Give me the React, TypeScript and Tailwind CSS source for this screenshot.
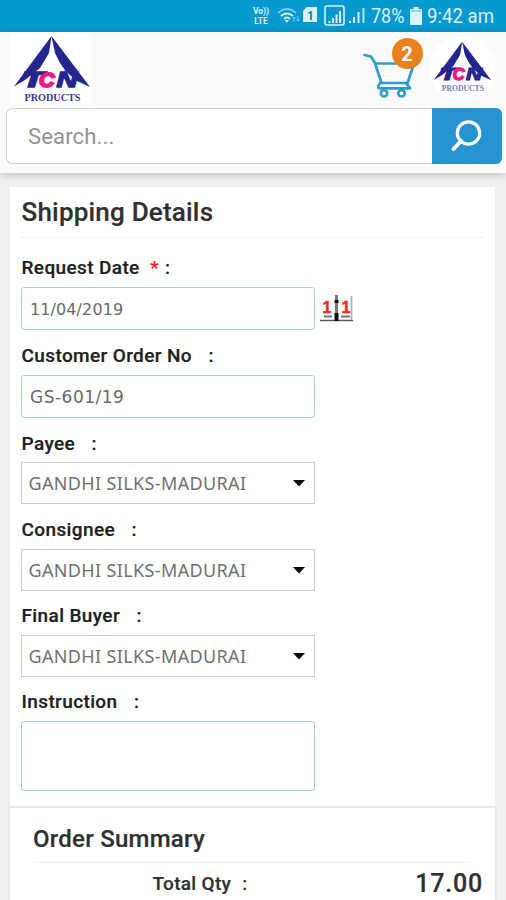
import React from "react";

function Logo({ small = false }: { small?: boolean }) {
  return (
    <svg viewBox="0 0 78 70" className="block h-full w-full" role="img" aria-label="TCN Products">
      <path d="M38.5 1 L1 51.5 L12 45 L27 33 L36 18 Z" fill="#24258f" />
      <path d="M38.5 1 L77 52 L64 46 L50 34 L42 18 Z" fill="#24258f" />
      <path d="M38.7 7 L35.5 22 L26 35 H52 L42.5 22 Z" fill="#fff" />
      <text x="9" y="52" fontSize="22.5" textLength="22" lengthAdjust="spacingAndGlyphs" fill="#24258f" stroke="#24258f" strokeWidth="1.6" className="font-['Liberation_Sans'] font-bold italic">T</text>
      <text x="26" y="51.5" fontSize="21" textLength="15.5" lengthAdjust="spacingAndGlyphs" fill="#f21885" stroke="#f21885" strokeWidth="2" className="font-['Liberation_Sans'] font-bold italic">C</text>
      <text x="43.5" y="51.5" fontSize="21.5" textLength="21" lengthAdjust="spacingAndGlyphs" fill="#24258f" stroke="#24258f" strokeWidth="1.4" className="font-['Liberation_Sans'] font-bold italic">N</text>
      <text x="11.5" y="65.5" fontSize="9.5" textLength="56" lengthAdjust="spacingAndGlyphs" fill={small ? "#7a7ab0" : "#37378f"} className="font-['Liberation_Serif'] font-bold">PRODUCTS</text>
    </svg>
  );
}

function StatusBar() {
  return (
    <div className="flex h-8 items-center bg-[#0699cf] pl-[252px] text-[#d8f2fb]">
      <div className="w-[18px] text-center text-[8.5px] leading-[10px] font-bold">
        <div className="whitespace-nowrap">Vo))</div>
        <div>LTE</div>
      </div>
      <svg width="104" height="24" viewBox="0 0 104 24" className="ml-1 shrink-0" fill="none" stroke="currentColor">
        <path d="M4 9 Q13 1 22 9" strokeWidth="1.5" opacity=".7" />
        <path d="M7 12 Q13 7 19 12 M10 15 Q13 12 16 15" strokeWidth="2" />
        <path d="M11 16 H15 L13 19 Z" fill="currentColor" stroke="none" />
        <path d="M20 13 V18 M24 12 V17 M18.5 14.5 L20 13 L21.5 14.5 M22.5 15.5 L24 17 L25.5 15.5" strokeWidth="1" opacity=".6" />
        <path d="M33 3 H43 V18 H29 V7 Z" fill="currentColor" stroke="none" />
        <text x="33" y="15.5" fontSize="12" fill="#087ba5" stroke="none" className="font-['Roboto'] font-bold">1</text>
        <rect x="51" y="2" width="19" height="19" rx="2" strokeWidth="1.6" />
        <path d="M55.5 17 V19 M59 14 V19 M62.5 10.5 V19 M66 7 V19" strokeWidth="2" />
        <path d="M76 17 V19 M80 13 V19 M84.5 8 V19" strokeWidth="2" />
        <path d="M89.5 4 V19" strokeWidth="2" opacity=".8" />
      </svg>
      <span className="-ml-[7px] w-[34px] pt-px text-[19.5px] leading-8 whitespace-nowrap"><span className="inline-block origin-left scale-x-[.92]">78%</span></span>
      <svg width="12" height="20" viewBox="0 0 12 20" className="ml-[5px] shrink-0" fill="currentColor">
        <path d="M3.5 1 H8.5 V3 H11 Q12 3 12 4 V18 Q12 19 11 19 H1 Q0 19 0 18 V4 Q0 3 1 3 H3.5 Z" />
        <path d="M1 4 H11 V6 H1 Z" fill="#8fd0ea" />
      </svg>
      <span className="ml-[5px] pt-px text-[19.5px] leading-8 whitespace-nowrap"><span className="inline-block origin-left scale-x-[.955]">9:42 am</span></span>
    </div>
  );
}

function CartButton() {
  return (
    <div className="relative h-[62px] w-[62px]">
      <svg width="62" height="62" viewBox="0 0 62 62" fill="none" stroke="#2e9dcc" strokeWidth="2.7" strokeLinejoin="round" strokeLinecap="round">
        <path d="M3.5 17 L10 18.5 L14 25 L20.5 45 H46.5 L53 25.5 H14.5" />
        <path d="M19 45 Q15.5 50.3 19 50.3 H49 M45 45 L49 50" />
        <circle cx="23" cy="55.3" r="3.2" />
        <circle cx="40.5" cy="55.3" r="3.2" />
      </svg>
      <div className="absolute top-0 left-[30.5px] flex h-[31px] w-[31px] items-center justify-center rounded-full bg-[#e9811d] pt-px text-[20px] font-bold text-white">2</div>
    </div>
  );
}

function Header() {
  return (
    <header className="relative h-[141px] bg-[#fafafa] shadow-[0_2px_8px_rgba(0,0,0,0.2)]">
      <div className="flex h-[76px] items-start">
        <div className="ml-[9px] h-[73px] w-[83px] bg-white pt-[3px] pl-[4px]">
          <div className="h-[70px] w-[78px]"><Logo /></div>
        </div>
        <div className="mt-[6px] ml-[269px]"><CartButton /></div>
        <div className="mt-[5px] ml-[7px] h-[62px] w-[66px] rounded-[28px] bg-white pt-[4px] pl-[3px]">
          <div className="h-[53px] w-[59px]"><Logo small /></div>
        </div>
      </div>
      <div className="mr-[4.5px] ml-[6px] flex h-[56px]">
        <div className="flex flex-1 items-center rounded-l-[6px] border-[1.5px] border-r-0 border-[#d2d2d2] bg-white pl-[21px] text-[22px] tracking-[.16px] text-[#929292]">Search...</div>
        <button className="flex w-[70px] items-center justify-center rounded-r-[6px] bg-[#2694d1]" aria-label="Search">
          <svg width="34" height="34" viewBox="0 0 34 34" fill="none" stroke="white" strokeLinecap="round">
            <circle cx="18.5" cy="14" r="11.2" strokeWidth="3.2" />
            <path d="M11 22 L3.5 30" strokeWidth="4" />
          </svg>
        </button>
      </div>
    </header>
  );
}

function Label({ text, gap, required }: { text: string; gap: string; required?: boolean }) {
  return (
    <div className="flex h-[36px] items-center pl-[.5px] text-[19px] font-medium tracking-[.38px] whitespace-pre text-[#202020] [-webkit-text-stroke:.2px]">
      <span>{text}</span>
      {required && <span className="ml-[10.5px] text-[#f51b1b]">*</span>}
      <span className={gap}>:</span>
    </div>
  );
}

function TextField({ value, size }: { value: string; size: string }) {
  return (
    <div className={`flex h-[43px] w-[294px] items-center rounded-[3px] border-[1.5px] border-[#a0d0e4] bg-white pt-[2px] pl-[8px] font-['DejaVu_Sans',sans-serif] text-[#6a6a6a] ${size}`}>
      {value}
    </div>
  );
}

function SelectField() {
  return (
    <div className="flex h-[42px] w-[294px] items-center justify-between border-[1.5px] border-[#cdcdcd] bg-white pr-[9px] pl-[6.5px]">
      <span className="font-['Noto_Sans',sans-serif] text-[18px] tracking-[.36px] whitespace-nowrap text-[#707070]">GANDHI SILKS-MADURAI</span>
      <svg width="12" height="7" viewBox="0 0 12 7"><path d="M0 0 H12 L6 6.5 Z" fill="#080808" /></svg>
    </div>
  );
}

function CalendarIcon() {
  return (
    <svg width="34" height="28" viewBox="0 0 34 28">
      <path d="M0 25.5 H33" stroke="#5d5d5d" strokeWidth="1.5" />
      <path d="M31.5 1 V25" stroke="#b2b2b2" strokeWidth="1.7" />
      <path d="M16.5 0 V26" stroke="#777" strokeWidth="3" />
      <path d="M16.5 5 V8 M16.5 18 V26" stroke="#111" strokeWidth="4" />
      <path d="M4 21.5 H12 M21 21.5 H30" stroke="#777" strokeWidth="2" />
      <text x="2.5" y="18" fontSize="16" fill="#f12828" stroke="#f12828" strokeWidth=".5" className="font-['Liberation_Sans'] font-bold">1</text>
      <text x="21.5" y="18" fontSize="16" fill="#f12828" stroke="#f12828" strokeWidth=".5" className="font-['Liberation_Sans'] font-bold">1</text>
    </svg>
  );
}

export default function App() {
  return (
    <div className="h-[900px] w-[506px] overflow-hidden bg-[#f0f0f0] font-['Roboto',sans-serif]">
      <StatusBar />
      <Header />
      <main className="pt-[14px]">
        <section className="mr-[11px] ml-[10px] h-[619px] bg-white pr-[11px] pl-[11px]">
          <h1 className="h-[51px] border-b border-[#f0f0f0] pl-[.5px] text-[26px] leading-[50px] font-medium tracking-[.2px] text-[#303030] [-webkit-text-stroke:.2px]">Shipping Details</h1>
          <div className="pt-[12px]">
            <Label text="Request Date" required gap="ml-[6px]" />
            <div className="mt-px flex items-center gap-[5px]">
              <TextField value="11/04/2019" size="text-[16px] tracking-[.1px]" />
              <CalendarIcon />
            </div>
            <div className="mt-[8px]"><Label text="Customer Order No" gap="ml-[16.5px]" /></div>
            <div className="mt-[1px]"><TextField value="GS-601/19" size="text-[17px] tracking-[.5px]" /></div>
            <div className="mt-[8px]"><Label text="Payee" gap="ml-[16.5px]" /></div>
            <div><SelectField /></div>
            <div className="mt-[8px]"><Label text="Consignee" gap="ml-[16.5px]" /></div>
            <div className="mt-[1px]"><SelectField /></div>
            <div className="mt-[7px]"><Label text="Final Buyer" gap="ml-[16.5px]" /></div>
            <div className="mt-[1px]"><SelectField /></div>
            <div className="mt-[7px]"><Label text="Instruction" gap="ml-[16.5px]" /></div>
            <div className="mt-[1px] h-[70px] w-[294px] rounded-[3px] border-[1.5px] border-[#a0d0e4] bg-white" />
          </div>
        </section>
        <section className="mr-[9px] ml-[8px] h-[110px] border-2 border-[#e9e9e9] bg-white pr-[24px] pl-[23px]">
          <h2 className="h-[55px] border-b border-[#eeeeee] text-[24px] leading-[62px] font-medium tracking-[.25px] text-[#303030] [-webkit-text-stroke:.2px]">Order Summary</h2>
          <div className="-mr-[12px] flex h-[42px] items-center pl-[119.5px] font-medium text-[#303030]">
            <span className="text-[19px] tracking-[.3px] [-webkit-text-stroke:.2px]">Total Qty</span>
            <span className="ml-[11px] text-[19px]">:</span>
            <span className="ml-auto text-[25px] tracking-[.8px] [-webkit-text-stroke:.2px]">17.00</span>
          </div>
        </section>
      </main>
    </div>
  );
}
